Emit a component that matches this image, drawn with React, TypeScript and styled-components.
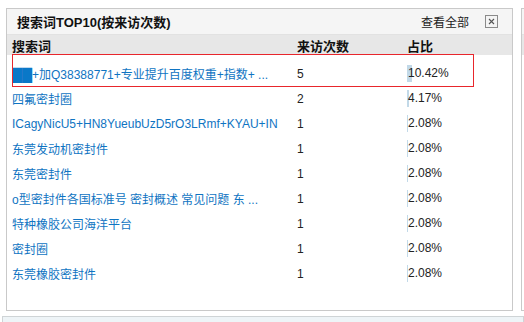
import React from "react";
import styled, { createGlobalStyle } from "styled-components";

const Global = createGlobalStyle`
  html, body { margin: 0; padding: 0; background: #fff; }
  body { font-family: "Liberation Sans", "Noto Sans CJK SC", sans-serif; font-size: 12px; color: #222; }
`;

const Page = styled.div`
  width: 524px;
  height: 322px;
  overflow: hidden;
  padding-top: 8px;
  box-sizing: border-box;
`;

const TopRow = styled.div`
  display: flex;
  gap: 8px;
  padding-left: 6px;
  height: 303px;
`;

const Panel = styled.div<{ $w?: number }>`
  position: relative;
  box-sizing: border-box;
  border: 1px solid #c9c9c9;
  background: #fff;
  ${(p) => (p.$w ? `width: ${p.$w}px; flex: none;` : "flex: 1;")}
  display: flex;
  flex-direction: column;
`;

const Header = styled.div`
  height: 25px;
  flex: none;
  background: #f5f5f5;
  border-bottom: 1px solid #e2e2e2;
  display: flex;
  align-items: center;
  padding: 0 14px 0 10px;
`;

const Title = styled.div`
  font-weight: bold;
  font-size: 13px;
  color: #111;
  flex: 1;
  white-space: nowrap;
`;

const MoreLink = styled.span`
  font-size: 12px;
  color: #222;
  margin-right: 16px;
`;

const CloseIcon = styled.svg`
  width: 13px;
  height: 13px;
  display: block;
`;

const ColHead = styled.div`
  height: 20px;
  flex: none;
  background: #e7e7e7;
  display: grid;
  grid-template-columns: 285px 110px 1fr;
  align-items: center;
  padding-left: 5px;
  font-weight: bold;
  font-size: 13px;
  color: #111;
`;

const Body = styled.div`
  padding-top: 6px;
  display: flex;
  flex-direction: column;
`;

const Row = styled.div`
  height: 25px;
  display: grid;
  grid-template-columns: 285px 110px 1fr;
  align-items: center;
  padding-left: 5px;
`;

const TermCell = styled.span`
  color: #0f74c2;
  white-space: nowrap;
  overflow: hidden;
  padding-right: 5px;
`;

const Block = styled.span`
  font-family: "DejaVu Sans", sans-serif;
  font-size: 13px;
  color: #0a78c8;
  vertical-align: -1px;
`;

const CountCell = styled.span`
  color: #222;
`;

const RatioCell = styled.span`
  height: 17px;
  line-height: 17px;
  color: #222;
  padding-left: 1px;
  background-repeat: no-repeat;
  background-position: left center;
  background-image: linear-gradient(#c2d9e8, #c2d9e8);
`;

const Highlight = styled.div`
  position: absolute;
  left: 5px;
  top: 45px;
  width: 462px;
  height: 33px;
  box-sizing: border-box;
  border: 1px solid #e8262c;
  pointer-events: none;
`;

const BottomPanel = styled.div`
  margin: 5px 0 0 2px;
  height: 20px;
  border: 1px solid #cfd4d6;
  background: #eef4f7;
`;

const rows = [
  { block: "██", term: "+加Q38388771+专业提升百度权重+指数+ ...", count: 5, pct: 10.42 },
  { term: "四氟密封圈", count: 2, pct: 4.17 },
  { term: "ICagyNicU5+HN8YueubUzD5rO3LRmf+KYAU+IN", count: 1, pct: 2.08 },
  { term: "东莞发动机密封件", count: 1, pct: 2.08 },
  { term: "东莞密封件", count: 1, pct: 2.08 },
  { term: "o型密封件各国标准号 密封概述 常见问题 东 ...", count: 1, pct: 2.08 },
  { term: "特种橡胶公司海洋平台", count: 1, pct: 2.08 },
  { term: "密封圈", count: 1, pct: 2.08 },
  { term: "东莞橡胶密封件", count: 1, pct: 2.08 },
];

export default function App() {
  return (
    <Page>
      <Global />
      <TopRow>
        <Panel $w={507}>
          <Header>
            <Title>搜索词TOP10(按来访次数)</Title>
            <MoreLink>查看全部</MoreLink>
            <CloseIcon viewBox="0 0 13 13">
              <rect x="0.5" y="0.5" width="12" height="12" fill="#f4f4f4" stroke="#8a8a8a" />
              <path d="M4 4 L9 9 M9 4 L4 9" stroke="#555" strokeWidth="1.1" />
            </CloseIcon>
          </Header>
          <ColHead>
            <span>搜索词</span>
            <span>来访次数</span>
            <span>占比</span>
          </ColHead>
          <Body>
            {rows.map((r, i) => (
              <Row key={i}>
                <TermCell>
                  {r.block && <Block>{r.block}</Block>}
                  {r.term}
                </TermCell>
                <CountCell>{r.count}</CountCell>
                <RatioCell style={{ backgroundSize: `${Math.max(1, Math.round(r.pct * 0.48))}px 17px` }}>
                  {r.pct.toFixed(2)}%
                </RatioCell>
              </Row>
            ))}
          </Body>
          <Highlight />
        </Panel>
        <Panel>
          <Header />
          <ColHead />
        </Panel>
      </TopRow>
      <BottomPanel />
    </Page>
  );
}
